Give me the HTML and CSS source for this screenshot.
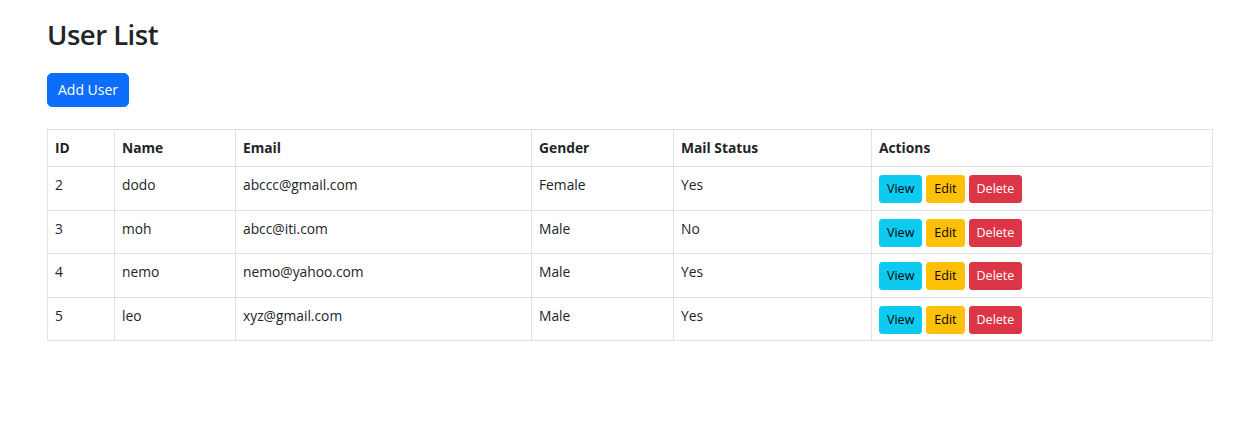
FILE: index.html
```html
<!DOCTYPE html>
<html lang="en">
<head>
<meta charset="utf-8">
<title>User List</title>
<link rel="stylesheet" href="styles.css">
</head>
<body>
<div class="container">
  <h2 class="title">User List</h2>
  <button class="btn btn-primary">Add User</button>
  <table class="table">
    <thead>
      <tr>
        <th class="c-id">ID</th>
        <th class="c-name">Name</th>
        <th class="c-email">Email</th>
        <th class="c-gender">Gender</th>
        <th class="c-mail">Mail Status</th>
        <th>Actions</th>
      </tr>
    </thead>
    <tbody>
      <tr>
        <td>2</td><td>dodo</td><td>abccc@gmail.com</td><td>Female</td><td>Yes</td>
        <td><div class="actions"><button class="btn-sm info">View</button><button class="btn-sm warning">Edit</button><button class="btn-sm danger">Delete</button></div></td>
      </tr>
      <tr>
        <td>3</td><td>moh</td><td>abcc@iti.com</td><td>Male</td><td>No</td>
        <td><div class="actions"><button class="btn-sm info">View</button><button class="btn-sm warning">Edit</button><button class="btn-sm danger">Delete</button></div></td>
      </tr>
      <tr>
        <td>4</td><td>nemo</td><td>nemo@yahoo.com</td><td>Male</td><td>Yes</td>
        <td><div class="actions"><button class="btn-sm info">View</button><button class="btn-sm warning">Edit</button><button class="btn-sm danger">Delete</button></div></td>
      </tr>
      <tr>
        <td>5</td><td>leo</td><td>xyz@gmail.com</td><td>Male</td><td>Yes</td>
        <td><div class="actions"><button class="btn-sm info">View</button><button class="btn-sm warning">Edit</button><button class="btn-sm danger">Delete</button></div></td>
      </tr>
    </tbody>
  </table>
</div>
</body>
</html>
```
FILE: styles.css
```css
* { box-sizing: border-box; }
body {
  margin: 0;
  font-family: "Open Sans", "Noto Sans", sans-serif;
  color: #212529;
  background: #fff;
  font-size: 14px;
}
.container {
  width: 1166px;
  margin-left: 47px;
  padding-top: 16px;
}
.title {
  margin: 0 0 19px;
  font-size: 27.5px;
  line-height: 38px;
  font-weight: 600;
  letter-spacing: -0.5px;
}
.btn {
  display: block;
  font-family: inherit;
  font-size: 14px;
  line-height: 20px;
  height: 34px;
  padding: 6px 10px;
  border: 1px solid transparent;
  border-radius: 5px;
  cursor: pointer;
}
.btn-primary {
  background: #0d6efd;
  border-color: #0d6efd;
  color: #fff;
  margin-bottom: 22px;
}
.table {
  width: 1166px;
  border-collapse: collapse;
  font-size: 13.8px;
}
.table th, .table td {
  border: 1px solid #dee2e6;
  padding: 8px 7px 6.5px;
  text-align: left;
  vertical-align: top;
  line-height: 20px;
}
.table th { font-weight: 700; padding-bottom: 8px; }
.c-id { width: 67px; }
.c-name { width: 121px; }
.c-email { width: 296px; }
.c-gender { width: 142px; }
.c-mail { width: 198px; }
.actions {
  display: flex;
  gap: 4px;
}
.btn-sm {
  font-family: inherit;
  font-size: 12.5px;
  line-height: 18px;
  height: 28px;
  padding: 4px 7px;
  border: 1px solid transparent;
  border-radius: 3px;
  cursor: pointer;
}
.info { background: #0dcaf0; border-color: #0dcaf0; color: #000; }
.warning { background: #ffc107; border-color: #ffc107; color: #000; }
.danger { background: #dc3545; border-color: #dc3545; color: #fff; }
```
